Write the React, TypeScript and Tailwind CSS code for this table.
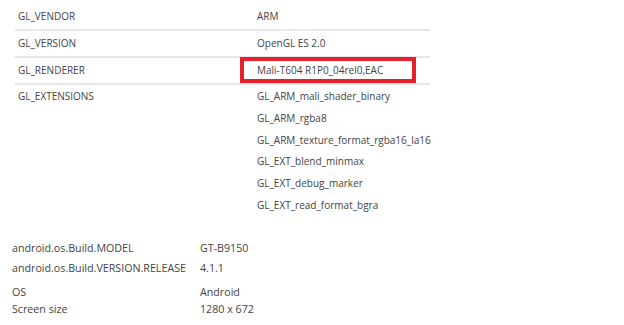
const glRows = [
  { name: "GL_VENDOR", value: "ARM" },
  { name: "GL_VERSION", value: "OpenGL ES 2.0" },
  { name: "GL_RENDERER", value: "Mali-T604 R1P0_04rel0,EAC", marked: true },
];

const extensions = [
  "GL_ARM_mali_shader_binary",
  "GL_ARM_rgba8",
  "GL_ARM_texture_format_rgba16_la16",
  "GL_EXT_blend_minmax",
  "GL_EXT_debug_marker",
  "GL_EXT_read_format_bgra",
];

function App() {
  return (
    <div className="w-[624px] h-[325px] bg-white text-[#444] text-[10px] font-['Open_Sans',sans-serif] overflow-hidden">
      {/* GL info table */}
      <div className="ml-[15px] w-[415px] pt-[4px]">
        {glRows.map((row) => (
          <div
            key={row.name}
            className="relative flex h-[27px] items-center border-b-2 border-[#e6e6e6]"
          >
            <div className="w-[241px] shrink-0 pl-[3px]">{row.name}</div>
            <div className="flex-1 pl-[1px]">{row.value}</div>
            {row.marked && (
              <div className="absolute left-[225px] top-[-1px] w-[176px] h-[26px] border-[4px] border-[#e8202a]" />
            )}
          </div>
        ))}
        <div className="flex pt-[1px]">
          <div className="w-[241px] shrink-0 pl-[3px] leading-[21.8px]">GL_EXTENSIONS</div>
          <div className="flex-1 pl-[1px] leading-[21.8px]">
            {extensions.map((ext) => (
              <div key={ext}>{ext}</div>
            ))}
          </div>
        </div>
      </div>

      {/* Build info */}
      <div className="ml-[12px] mt-[21px] leading-[20px] text-[10.7px]">
        <div className="flex">
          <div className="w-[188px] shrink-0">android.os.Build.MODEL</div>
          <div>GT-B9150</div>
        </div>
        <div className="flex">
          <div className="w-[188px] shrink-0">android.os.Build.VERSION.RELEASE</div>
          <div>4.1.1</div>
        </div>
      </div>
      <div className="ml-[12px] mt-[6px] leading-[17px] text-[10.7px]">
        <div className="flex">
          <div className="w-[188px] shrink-0">OS</div>
          <div>Android</div>
        </div>
        <div className="flex">
          <div className="w-[188px] shrink-0">Screen size</div>
          <div>1280 x 672</div>
        </div>
      </div>
    </div>
  );
}

export default App;
